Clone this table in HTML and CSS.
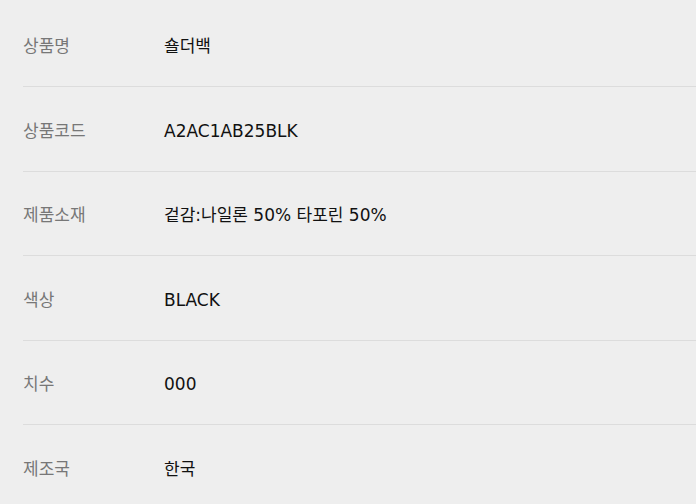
FILE: index.html
```html
<!DOCTYPE html>
<html lang="ko">
<head>
<meta charset="utf-8">
<link rel="stylesheet" href="styles.css">
</head>
<body>
<dl class="spec">
  <div class="row"><dt>상품명</dt><dd>숄더백</dd></div>
  <div class="row"><dt>상품코드</dt><dd>A2AC1AB25BLK</dd></div>
  <div class="row"><dt>제품소재</dt><dd>겉감:나일론 50% 타포린 50%</dd></div>
  <div class="row"><dt>색상</dt><dd>BLACK</dd></div>
  <div class="row"><dt>치수</dt><dd>000</dd></div>
  <div class="row"><dt>제조국</dt><dd>한국</dd></div>
</dl>
</body>
</html>
```
FILE: styles.css
```css
html, body {
  margin: 0;
  padding: 0;
  background: #eeeeee;
  height: 100%;
  overflow: hidden;
}
body {
  font-family: "DejaVu Sans", "Noto Sans CJK KR", sans-serif;
  font-size: 17px;
  line-height: 24px;
}
.spec {
  margin: 0;
  padding: 2.5px 0 0 23px;
}
.row {
  display: flex;
  align-items: center;
  height: 84.5px;
  box-sizing: border-box;
  border-bottom: 1px solid #dcdcdc;
  padding-top: 4px;
}
.row dt {
  width: 141px;
  color: #777777;
}
.row dd {
  margin: 0;
  color: #111111;
}
```
